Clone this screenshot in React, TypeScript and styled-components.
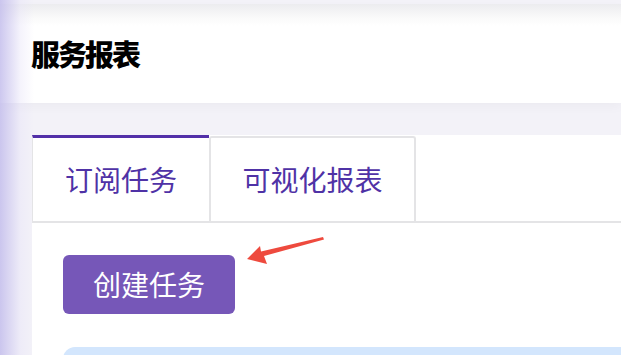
import styled, { createGlobalStyle } from "styled-components"

const GlobalStyle = createGlobalStyle`
    html, body {
        margin: 0;
        background: #f3f2f8;
        font-family: "Noto Sans CJK SC", "Noto Sans", sans-serif;
    }
`

const Page = styled.div`
    position: relative;
    height: 355px;
    overflow: hidden;
    padding-top: 4px;
    box-sizing: border-box;
    &::before{
        content: '';
        position: absolute;
        left: 0;
        top: 0;
        bottom: 0;
        width: 34px;
        background: linear-gradient(to right, rgba(196, 190, 236, 0.85), rgba(230, 226, 248, 0.4) 60%, rgba(255, 255, 255, 0));
        pointer-events: none;
    }
`
const Header = styled.header`
    height: 99px;
    background: linear-gradient(#ececef 0, #fafafa 14px, #fff 22px);
    display: flex;
    align-items: center;
    padding-left: 31px;
    box-shadow: 0 4px 10px rgba(0, 0, 0, 0.03);
`
const Title = styled.h1`
    margin: 0 0 2px;
    font-size: 29px;
    font-weight: 900;
    color: #000;
    letter-spacing: -2px;
`
const Main = styled.main`
    padding: 32px 0 0 32px;
`
const Panel = styled.section`
    background: #fff;
    height: 240px;
    position: relative;
`
const Tabs = styled.div`
    display: flex;
    border-bottom: 2px solid #e4e4e6;
`
const Tab = styled.div<{ $active?: boolean }>`
    box-sizing: border-box;
    height: ${p => p.$active ? '86px' : '85px'};
    margin-bottom: ${p => p.$active ? '-2px' : '0'};
    margin-top: ${p => p.$active ? '0' : '1px'};
    width: ${p => p.$active ? '177px' : '207px'};
    display: flex;
    align-items: center;
    justify-content: center;
    font-size: 28px;
    color: #4f32a6;
    background: #fff;
    border: 2px solid #e4e4e6;
    border-bottom: none;
    border-top: ${p => p.$active ? '3px solid #5230a8' : '2px solid #e4e4e6'};
    border-left: ${p => p.$active ? '1px solid #e4e4e6' : '2px solid #e4e4e6'};
    border-right: ${p => p.$active ? 'none' : '2px solid #e4e4e6'};
    border-radius: ${p => p.$active ? '0' : '3px 3px 0 0'};
    padding-bottom: 2px;
`
const Content = styled.div`
    padding: 32px 0 0 31px;
`
const Button = styled.button`
    width: 172px;
    height: 59px;
    border: none;
    border-radius: 6px;
    background: #7657b8;
    color: #fff;
    font-family: inherit;
    font-size: 28px;
    padding: 0 0 2px;
`
const Notice = styled.div`
    margin-top: 33px;
    height: 60px;
    background: #d3e6fd;
    border-radius: 12px 0 0 0;
`
const Arrow = styled.svg`
    position: absolute;
    left: 212px;
    top: 98px;
`

export default function App() {
    return <Page>
        <GlobalStyle />
        <Header>
            <Title>服务报表</Title>
        </Header>
        <Main>
            <Panel>
                <Tabs>
                    <Tab $active>订阅任务</Tab>
                    <Tab>可视化报表</Tab>
                </Tabs>
                <Content>
                    <Button>创建任务</Button>
                    <Notice />
                </Content>
                <Arrow width="84" height="34" viewBox="0 0 84 34">
                    <path d="M3 26 L16 13 L17 18.5 L79 4 L80 6.5 L20 23 L23 31 Z" fill="#ee4a3e" />
                </Arrow>
            </Panel>
        </Main>
    </Page>
}
